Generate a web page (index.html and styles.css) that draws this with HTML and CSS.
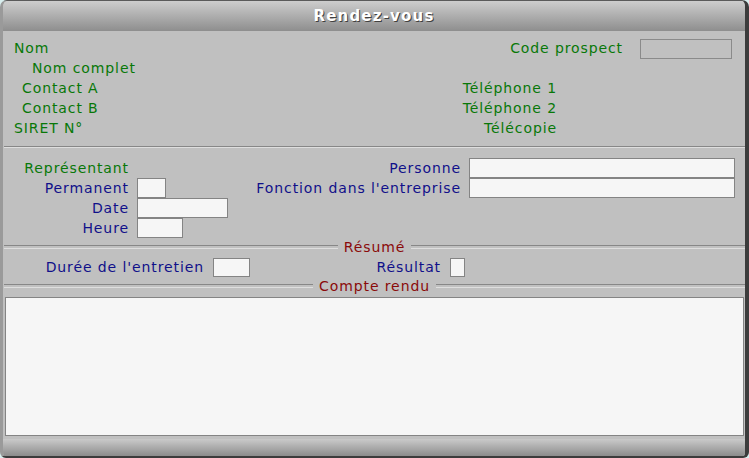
FILE: index.html
```html
<!DOCTYPE html>
<html lang="fr">
<head>
    <meta charset="UTF-8">
    <title>Rendez-vous</title>
    <link rel="stylesheet" href="styles.css">
</head>
<body>

    <div class="win">
        <div class="titlebar">Rendez-vous</div>

        <div class="content">
            <!-- fiche prospect -->
            <div class="top">
                <div class="row">
                    <span class="lbl green ind1">Nom</span>
                    <div class="code">
                        <span class="lbl green">Code prospect</span>
                        <span class="box ro w-code"></span>
                    </div>
                </div>
                <div class="row">
                    <span class="lbl green ind2">Nom complet</span>
                </div>
                <div class="row">
                    <span class="lbl green ind3">Contact A</span>
                    <span class="lbl green right">Téléphone 1</span>
                </div>
                <div class="row">
                    <span class="lbl green ind3">Contact B</span>
                    <span class="lbl green right">Téléphone 2</span>
                </div>
                <div class="row">
                    <span class="lbl green ind1">SIRET N°</span>
                    <span class="lbl green right">Télécopie</span>
                </div>
            </div>

            <div class="sep"></div>

            <!-- representant -->
            <div class="rdv">
                <span class="lbl green right">Représentant</span>
                <span></span>
                <span class="lbl navy right">Personne</span>
                <span class="box w-full"></span>

                <span class="lbl navy right">Permanent</span>
                <span class="box w-perm"></span>
                <span class="lbl navy right">Fonction dans l'entreprise</span>
                <span class="box w-full"></span>

                <span class="lbl navy right">Date</span>
                <span class="box w-date"></span>
                <span></span>
                <span></span>

                <span class="lbl navy right">Heure</span>
                <span class="box w-heure"></span>
            </div>

            <div class="legend">Résumé</div>

            <div class="resume">
                <span class="lbl navy right">Durée de l'entretien</span>
                <span class="box"></span>
                <span class="lbl navy right">Résultat</span>
                <span class="box"></span>
            </div>

            <div class="legend">Compte rendu</div>

            <div class="memo"></div>
        </div>

        <div class="footbar"></div>
    </div>

</body>
</html>
```

FILE: styles.css
```css
* {
    padding: 0;
    margin: 0;
    box-sizing: border-box;
}
body {
    background-color: #d8eeee;
    font-family: "DejaVu Sans", Verdana, sans-serif;
    font-size: 14px;
}

/* fenetre */
.win {
    width: 749px;
    height: 458px;
    background-color: #c0c0c0;
    border-top: 1px solid #5a5a5a;
    border-left: 3px solid #9a9a9a;
    border-right: 4px solid #3c3c3c;
    border-bottom: 2px solid #3c3c3c;
    border-radius: 7px 7px 6px 6px;
    overflow: hidden;
    display: flex;
    flex-direction: column;
}
.titlebar {
    height: 30px;
    line-height: 30px;
    text-align: center;
    color: #fff;
    font-weight: bold;
    font-size: 15px;
    letter-spacing: 1.2px;
    text-shadow: 1px 1px 0 #404040;
    background: linear-gradient(#cdcdcd, #8e8e8e);
}
.footbar {
    height: 17px;
    background: linear-gradient(#cacaca, #8c8c8c);
}
.content {
    flex: 1;
    padding-top: 7px;
}

/* textes */
.lbl {
    line-height: 20px;
    letter-spacing: 0.9px;
    white-space: nowrap;
}
.green { color: #087808; }
.navy { color: #10108a; }
.right { text-align: right; }
.ind1 { padding-left: 11px; }
.ind2 { padding-left: 29px; }
.ind3 { padding-left: 19px; }

/* champs */
.box {
    display: block;
    height: 20px;
    background-color: #f6f6f6;
    border: 1px solid #848484;
}
.box.ro {
    background-color: transparent;
    border-color: #8a8a8a;
}
.w-code { width: 92px; margin-top: 1px; }
.w-perm { width: 29px; }
.w-date { width: 91px; }
.w-heure { width: 46px; }
.w-full { width: 266px; }

/* haut */
.top .row {
    height: 20px;
    display: grid;
    grid-template-columns: 357px 197px 1fr;
}
.top .row .right {
    grid-column: 2;
}
.top .code {
    grid-column: 2 / 4;
    display: flex;
    justify-content: flex-end;
    align-items: flex-start;
    gap: 17px;
    padding-right: 13px;
}

.sep {
    margin: 8px 0 0 1px;
    height: 2px;
    border-top: 1px solid #878787;
    border-bottom: 1px solid #dedede;
}

.rdv {
    margin-top: 10px;
    display: grid;
    grid-template-columns: 126px 111px 205px 266px;
    grid-auto-rows: 20px;
    column-gap: 8px;
}

.legend {
    height: 18px;
    margin-left: 1px;
    display: flex;
    align-items: center;
    gap: 6px;
    color: #8a0a0a;
    letter-spacing: 0.9px;
}
.legend::before,
.legend::after {
    content: "";
    flex: 1;
    height: 2px;
    border-top: 1px solid #878787;
    border-bottom: 1px solid #dedede;
}

.resume {
    margin-top: 2px;
    display: grid;
    grid-template-columns: 201px 37px 182px 15px;
    grid-auto-rows: 19px;
    column-gap: 9px;
}
.resume .lbl {
    line-height: 19px;
}
.resume .box {
    height: 19px;
}

.memo {
    margin: 2px 1px 0 2px;
    height: 139px;
    background-color: #f6f6f6;
    border: 1px solid #848484;
}
```
